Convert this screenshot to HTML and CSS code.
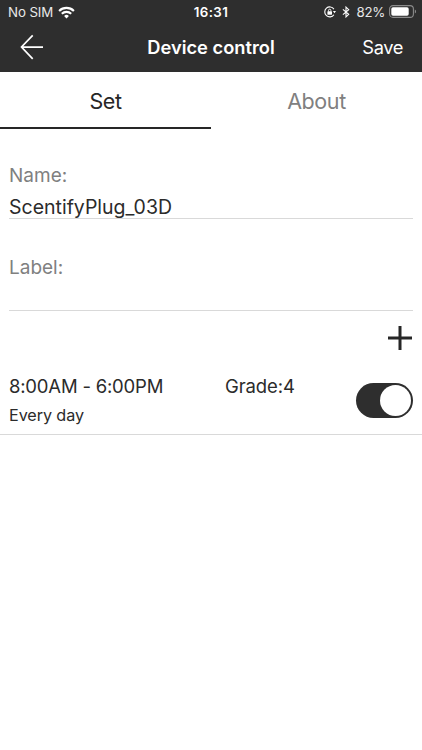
FILE: index.html
```html
<!DOCTYPE html>
<html lang="en">
<head>
  <meta charset="UTF-8" />
  <meta name="viewport" content="width=device-width, initial-scale=1.0"/>
  <title>Device control</title>
  <link rel="stylesheet" href="styles.css">
</head>
<body>

  <header>
    <!-- Status bar -->
    <div class="status">
      <div class="status-left">
        <span class="carrier">No SIM</span>
        <svg width="17" height="13" viewBox="0 0 17 13" fill="none" stroke="#fff" stroke-width="2.1">
          <path d="M1.1 4.9a10.6 10.6 0 0 1 14.8 0"/>
          <path d="M3.8 7.8a6.8 6.8 0 0 1 9.4 0"/>
          <path d="M8.5 12.4l-2.4-2.5a3.5 3.5 0 0 1 4.8 0z" fill="#fff" stroke="none"/>
        </svg>
      </div>
      <span class="time">16:31</span>
      <div class="status-right">
        <svg class="lock" width="12" height="12" viewBox="0 0 12 12" fill="none" stroke="#fff">
          <path d="M9.9 3.1A5 5 0 1 0 9.9 8.7" stroke-width="1.1"/>
          <path d="M8.9 4.9h3.1l-1.5 2.3z" fill="#fff" stroke="none"/>
          <rect x="3.4" y="5.3" width="4.6" height="3.4" rx=".4" fill="#fff" stroke="none"/>
          <path d="M4.5 5.5V4.4a1.2 1.2 0 0 1 2.4 0v1.1" stroke-width=".9"/>
        </svg>
        <svg class="bluetooth" width="8" height="12" viewBox="0 0 8 12" fill="none" stroke="#fff" stroke-width="1.1">
          <path d="M.9 3.3l5.8 5L4 10.9V1.1l2.7 2.6-5.8 5"/>
        </svg>
        <span class="percent">82%</span>
        <svg class="battery" width="28" height="13" viewBox="0 0 28 13">
          <rect x=".6" y=".6" width="23.8" height="11.8" rx="3.4" fill="none" stroke="#8b8b8b" stroke-width="1.1"/>
          <rect x="2.3" y="2.3" width="17.4" height="8.4" rx="1.7" fill="#fff"/>
          <path d="M25.8 4.4c1.7.7 1.7 3.5 0 4.2z" fill="#8b8b8b"/>
        </svg>
      </div>
    </div>

    <!-- Title bar -->
    <div class="navbar">
      <a class="back">
        <svg width="24" height="26" viewBox="0 0 24 26" fill="none" stroke="#fff" stroke-width="1.7">
          <path d="M12.7 1.3L1.5 13l11.2 11.8M1.5 13.2H23"/>
        </svg>
      </a>
      <h1>Device control</h1>
      <a class="save">Save</a>
    </div>
  </header>

  <nav class="tabs">
    <a class="tab active">Set</a>
    <a class="tab">About</a>
  </nav>

  <main>
    <div class="field">
      <label>Name:</label>
      <div class="value">ScentifyPlug_03D</div>
    </div>
    <div class="field">
      <label>Label:</label>
      <div class="value"></div>
    </div>

    <div class="add">
      <svg width="26" height="26" viewBox="0 0 26 26" stroke="#262626" stroke-width="3">
        <path d="M13 1v24M1 13h24"/>
      </svg>
    </div>

    <!-- Schedule -->
    <div class="schedule">
      <div class="period">
        <div class="hours">8:00AM - 6:00PM</div>
        <div class="days">Every day</div>
      </div>
      <div class="grade">Grade:4</div>
      <div class="switch"><div class="knob"></div></div>
    </div>
  </main>

</body>
</html>
```
FILE: styles.css
```css
* {
  margin: 0;
  padding: 0;
  box-sizing: border-box;
}

body {
  height: 750px;
  overflow: hidden;
  background: #fff;
  color: #2b2b2b;
  font-family: Inter, "Liberation Sans", sans-serif;
  white-space: nowrap;
}

svg {
  display: block;
}

header {
  height: 72px;
  background: #2e2e2e;
  color: #fff;
}

.status {
  display: grid;
  grid-template-columns: 1fr auto 1fr;
  align-items: center;
  height: 24px;
  padding: 0 6px 0 8px;
  font-size: 13.3px;
}
.status-left, .status-right {
  display: flex;
  align-items: center;
}
.status-left {
  gap: 5px;
}
.status-right {
  justify-content: flex-end;
}
.carrier, .percent {
  color: #e8e8e8;
}
.carrier {
  letter-spacing: -0.1px;
}
.percent {
  letter-spacing: -0.3px;
}
.time {
  margin-right: 2px;
  font-weight: 600;
  letter-spacing: 0.4px;
}
.bluetooth {
  margin: 0 7px 0 6px;
}
.battery {
  margin: -1px -1px 0 4px;
}

.navbar {
  display: grid;
  grid-template-columns: 1fr auto 1fr;
  align-items: center;
  height: 46px;
  padding: 0 19px;
}
.back {
  padding-left: 1px;
}
h1 {
  font-size: 18.3px;
  font-weight: 600;
}
.save {
  justify-self: end;
  font-size: 18.3px;
  letter-spacing: -0.4px;
}

.tabs {
  display: flex;
  height: 57px;
}
.tab {
  flex: 1;
  display: flex;
  align-items: center;
  justify-content: center;
  padding-top: 3px;
  border-bottom: 2px solid transparent;
  color: #808080;
  font-size: 21.5px;
  letter-spacing: -0.4px;
}
.tab.active {
  color: #262626;
  border-color: #262626;
}

main {
  padding-top: 34px;
}
.field {
  margin: 0 9px;
  height: 56px;
  border-bottom: 1px solid #d9d9d9;
  font-size: 19px;
}
.field + .field {
  margin-top: 36px;
}
.field label {
  display: block;
  height: 31px;
  line-height: 26px;
  color: #808080;
}
.value {
  font-size: 19.5px;
  line-height: 26px;
}

.add {
  display: flex;
  justify-content: flex-end;
  padding: 14px 9px 0;
}

.schedule {
  display: grid;
  grid-template-columns: 216px 1fr auto;
  height: 84px;
  padding: 23px 9px 0;
  border-bottom: 1px solid #d9d9d9;
  font-size: 18.5px;
  line-height: 24px;
}
.hours {
  letter-spacing: -0.2px;
}
.grade {
  letter-spacing: -0.1px;
}
.days {
  margin-top: 5px;
  font-size: 16.2px;
  letter-spacing: -0.1px;
}
.switch {
  width: 57px;
  height: 35px;
  margin-top: 9px;
  padding: 2px;
  border-radius: 18px;
  background: #2e2e2e;
}
.knob {
  width: 31px;
  height: 31px;
  margin-left: auto;
  border-radius: 50%;
  background: #fff;
}
```
